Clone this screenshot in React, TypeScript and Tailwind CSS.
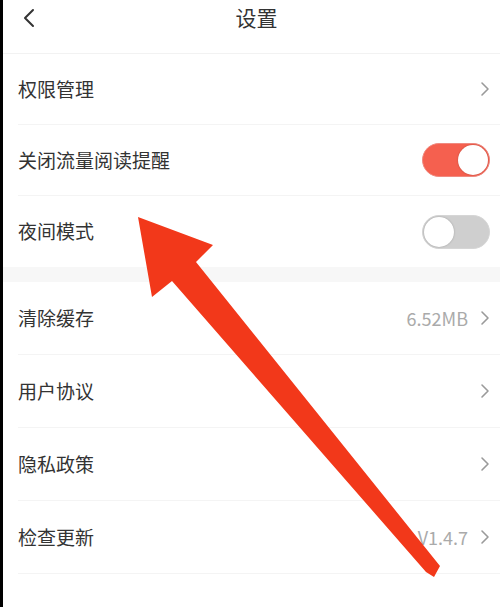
import React from "react";

const font = { fontFamily: '"Noto Sans CJK SC", "Noto Sans", sans-serif' };

function Chevron() {
  return (
    <svg width="10" height="16" viewBox="0 0 10 16" className="shrink-0">
      <path d="M2 2 L8 8 L2 14" fill="none" stroke="#9a9a9a" strokeWidth="1.6" strokeLinecap="round" strokeLinejoin="round" />
    </svg>
  );
}

function Toggle({ on }: { on: boolean }) {
  return (
    <div
      className={`relative w-[68px] h-[34px] rounded-full ${on ? "bg-[#f5604f] border border-[#f08a80]" : "bg-[#cfcfcf] border border-[#d6d6d6]"}`}
    >
      <div
        className={`absolute top-[1px] w-[30px] h-[30px] rounded-full bg-white shadow-[0_0_2px_rgba(0,0,0,0.25)] ${on ? "right-[1px]" : "left-[1px]"}`}
      />
    </div>
  );
}

function Row({
  label,
  right,
  divider = true,
  h,
}: {
  label: string;
  right: React.ReactNode;
  divider?: boolean;
  h: string;
}) {
  return (
    <div className={`flex items-center pl-[15px] ${h}`}>
      <div className={`flex items-center flex-1 h-full pr-[10px] ${divider ? "border-b border-[#f4f4f4]" : ""}`}>
        <span className="flex-1 text-[19px] text-[#333333]">{label}</span>
        {right}
      </div>
    </div>
  );
}

export default function App() {
  return (
    <div className="relative flex w-[500px] h-[607px] bg-white overflow-hidden" style={font}>
      <div className="w-[3px] bg-black shrink-0" />
      <div className="flex flex-col flex-1">
        <div className="relative flex items-center justify-center h-[54px] border-b border-[#f2f2f2]">
          <svg width="14" height="20" viewBox="0 0 14 20" className="absolute left-[19px] top-[8px]">
            <path d="M11 2 L3 10 L11 18" fill="none" stroke="#333" strokeWidth="2" strokeLinecap="round" strokeLinejoin="round" />
          </svg>
          <span className="text-[21px] text-[#333333] -mt-[18px] ml-[10px]">设置</span>
        </div>
        <Row h="h-[71px]" label="权限管理" right={<Chevron />} />
        <Row h="h-[71px]" label="关闭流量阅读提醒" right={<Toggle on />} />
        <Row h="h-[71px]" label="夜间模式" divider={false} right={<Toggle on={false} />} />
        <div className="h-[15px] bg-[#f7f7f7]" />
        <Row
          h="h-[73px]"
          label="清除缓存"
          right={
            <div className="flex items-center gap-[12px]">
              <span className="text-[18px] text-[#aaaaaa]">6.52MB</span>
              <Chevron />
            </div>
          }
        />
        <Row h="h-[73px]" label="用户协议" right={<Chevron />} />
        <Row h="h-[73px]" label="隐私政策" right={<Chevron />} />
        <Row
          h="h-[73px]"
          label="检查更新"
          right={
            <div className="flex items-center gap-[12px]">
              <span className="text-[18px] text-[#aaaaaa]">V1.4.7</span>
              <Chevron />
            </div>
          }
        />
      </div>
      <svg className="absolute left-0 top-0 pointer-events-none" width="500" height="607" viewBox="0 0 500 607">
        <polygon
          points="138,217 213,245 196,262 440,566 434,577 426,572 172,281 152,297"
          fill="#f2381a"
        />
      </svg>
    </div>
  );
}
